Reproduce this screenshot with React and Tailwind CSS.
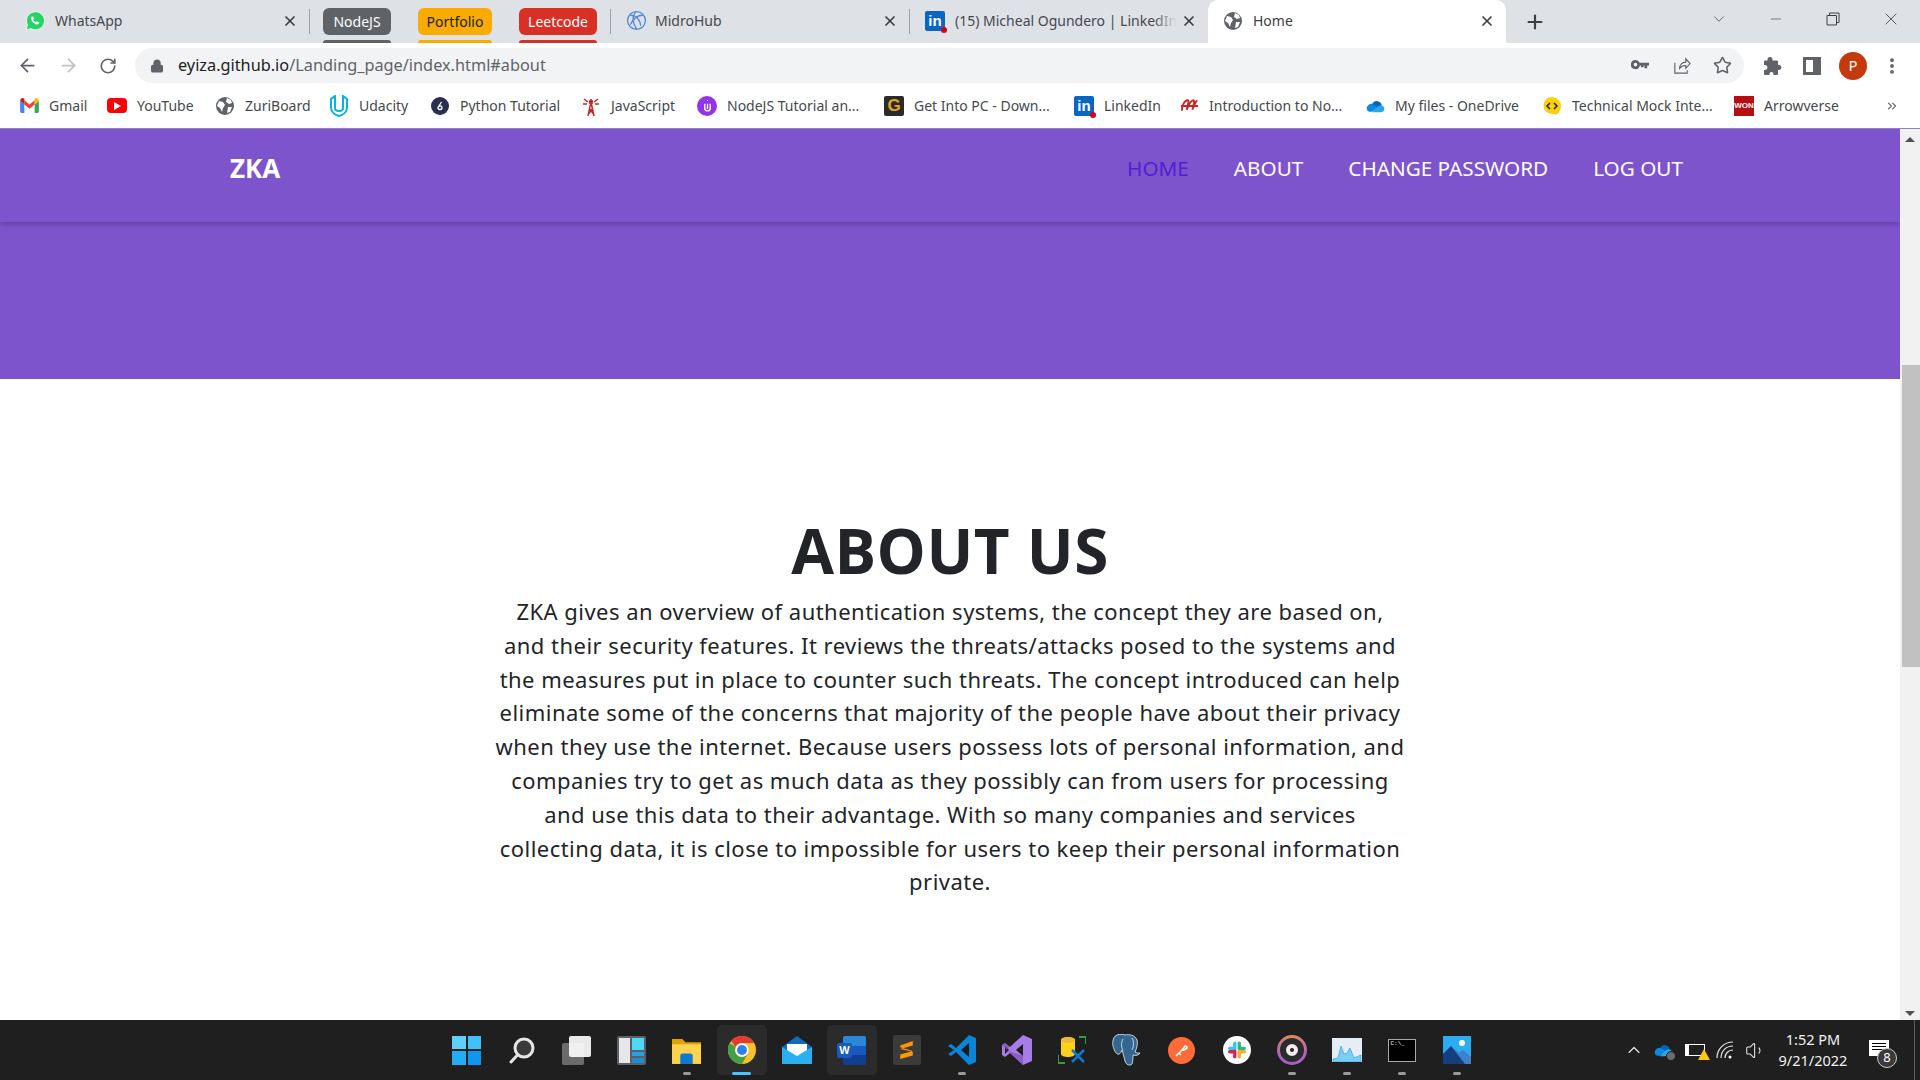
import React from 'react';
import { ArrowLeft, ArrowRight, RotateCw, Lock, Star, X, Plus, ChevronDown, Minus, EllipsisVertical, ChevronsRight, ChevronUp, Volume1 } from 'lucide-react';

const ui = { fontFamily: '"Noto Sans", "Open Sans", sans-serif' };

// favicons
const Globe = ({ c = '#5f6368' }) => (
  <svg viewBox="0 0 20 20" className="w-[20px] h-[20px] shrink-0">
    <circle cx="10" cy="10" r="9" fill={c} />
    <path d="M4 5l4 1 2 3-2 3-1 4-2-4-3-2zM12 2l4 2 1 3-3 1-3-2zM13 11l4 0-2 5-3 1z" fill="#fff" />
  </svg>
);
const WhatsAppIcon = () => (
  <svg viewBox="0 0 20 20" className="w-[20px] h-[20px] shrink-0">
    <path d="M1 19l1.5-5A9 9 0 1 1 6 17.6z" fill="#25d366" stroke="#fff" strokeWidth="0.8" />
    <path d="M7 5.5c-1 .6-1.400 2-.6 3.600 1 2 2.800 3.600 4.800 4.300 1.400.4 2.600-.2 3-1.300l-.2-.8-2-1-1 1c-1.200-.5-2.200-1.500-2.800-2.800l.8-1-.9-2.100z" fill="#fff" />
  </svg>
);
const LinkedIn = ({ dot = true }) => (
  <span className="relative w-[20px] h-[20px] shrink-0 bg-[#0a66c2] rounded-[2px] flex items-center justify-center text-white font-bold text-[15px] leading-none" style={{ fontFamily: '"Liberation Sans", sans-serif' }}>
    in
    {dot && <span className="absolute right-[-2px] bottom-[-2px] w-[6px] h-[6px] rounded-full bg-[#d6001c]" />}
  </span>
);
const MidroIcon = () => (
  <svg viewBox="0 0 20 20" className="w-[21px] h-[21px] shrink-0" fill="none" stroke="#4f86d9" strokeWidth="1.200">
    <circle cx="10" cy="10" r="8.500" />
    <path d="M4 5c5 0 9 3 10 10M9 2c-3 4-3 10 1 16M16 5c-4 0-9 3-12 9" />
  </svg>
);
const Gmail = () => (
  <svg viewBox="0 0 20 16" className="w-[19px] h-[15px] shrink-0">
    <path d="M0 3v11.500A1.500 1.500 0 0 0 1.500 16H4.500V7z" fill="#4285f4" />
    <path d="M20 3v11.500a1.500 1.500 0 0 1-1.500 1.500h-3V7z" fill="#34a853" />
    <path d="M4.500 7v-4.500L10 7l5.500-4.500V7L10 11.500z" fill="#ea4335" />
    <path d="M0 3c0-2.500 2.800-3.800 4.500-2.300V7z" fill="#c5221f" />
    <path d="M20 3c0-2.500-2.800-3.800-4.500-2.300V7z" fill="#fbbc04" />
  </svg>
);
const YouTube = () => (
  <span className="w-[20px] h-[15px] shrink-0 rounded-[4px] bg-[#f00] flex items-center justify-center">
    <svg viewBox="0 0 8 8" className="w-[8px] h-[8px]"><path d="M1 0l7 4-7 4z" fill="#fff" /></svg>
  </span>
);
const Udacity = () => (
  <svg viewBox="0 0 20 22" className="w-[20px] h-[22px] shrink-0" fill="none" stroke="#02b3e4" strokeWidth="2">
    <path d="M2 4v9c0 4 4 7 8 8 4-1 8-4 8-8V4l-4-3v12c0 2-2 3-4 3s-4-1-4-3V1z" />
  </svg>
);
const PythonT = () => (
  <span className="w-[18px] h-[18px] shrink-0 rounded-full bg-[#2a2f4f] flex items-center justify-center">
    <svg viewBox="0 0 10 10" className="w-[10px] h-[10px]" fill="none" stroke="#fff" strokeWidth="1.300"><path d="M6.500 1L3 6.500a2 2 0 1 0 4 0 2 2 0 0 0-3.500-1" /></svg>
  </span>
);
const JsTower = () => (
  <svg viewBox="0 0 20 22" className="w-[20px] h-[22px] shrink-0" fill="none" stroke="#c62828" strokeWidth="1.500">
    <path d="M7 21L10 7l3 14M8 15h4M7.500 19L12 13M12.500 19L8 13M10 6V4M3 4l4 3M17 4l-4 3M2 9h4M18 9h-4" />
    <circle cx="10" cy="7" r="1.500" fill="#c62828" />
  </svg>
);
const NodeTut = () => (
  <span className="w-[20px] h-[20px] shrink-0 rounded-full bg-[#9333ea] flex items-center justify-center">
    <svg viewBox="0 0 10 14" className="w-[9px] h-[13px]" fill="none" stroke="#fff" strokeWidth="1.500"><path d="M2 5v5a3 3 0 0 0 6 0V5M5 1v1M5 5v6" /></svg>
  </span>
);
const GetInto = () => (
  <span className="w-[20px] h-[20px] shrink-0 bg-[#2b2b2b] rounded-[2px] flex items-center justify-center text-[#e0a526] font-bold text-[17px] leading-none" style={{ fontFamily: '"Liberation Sans", sans-serif' }}>G</span>
);
const IntroIcon = () => (
  <svg viewBox="0 0 20 16" className="w-[19px] h-[16px] shrink-0" fill="none" stroke="#c62828" strokeWidth="2">
    <path d="M2 13C2 7 5 2 8 2c2 0 0 6-1 10M7 12c2-5 5-10 7-10 2 0 0 6-1 10M13 12c1-3 3-8 5-10M1 8h18" />
  </svg>
);
const OneDrive = ({ className = 'w-[20px] h-[14px]' }) => (
  <svg viewBox="0 0 24 16" className={`${className} shrink-0`}>
    <path d="M9 5a6 6 0 0 1 11 2l-6 5-8-2z" fill="#0364b8" />
    <path d="M4 7a5 5 0 0 1 6-1l5 4-7 5H5a4.500 4.500 0 0 1-1-8z" fill="#0f88e0" />
    <path d="M19 7a4.500 4.500 0 0 1 3.500 7L20 15.500H8l7-7z" fill="#28a8ea" />
  </svg>
);
const MockIcon = () => (
  <svg viewBox="0 0 20 20" className="w-[20px] h-[20px] shrink-0">
    <path d="M10 1a9 9 0 0 1 9 9c0 6-4 8-5 9l-1-1H10a8.500 8.500 0 0 1 0-17z" fill="#fdd00e" />
    <path d="M8 7l-3 3 3 3M12 7l3 3-3 3" fill="none" stroke="#222" strokeWidth="1.500" />
  </svg>
);
const WonIcon = () => (
  <span className="w-[20px] h-[20px] shrink-0 bg-[#b80d12] flex items-center justify-center text-white font-bold text-[8px] leading-none" style={{ fontFamily: '"Liberation Sans", sans-serif' }}>WON</span>
);

const bookmarks = [
  { label: 'Gmail', w: 'w-[88px]', icon: <Gmail /> },
  { label: 'YouTube', w: 'w-[108px]', icon: <YouTube /> },
  { label: 'ZuriBoard', w: 'w-[114px]', icon: <Globe /> },
  { label: 'Udacity', w: 'w-[101px]', icon: <Udacity /> },
  { label: 'Python Tutorial', w: 'w-[151px]', icon: <PythonT /> },
  { label: 'JavaScript', w: 'w-[116px]', icon: <JsTower /> },
  { label: 'NodeJS Tutorial an...', w: 'w-[187px]', icon: <NodeTut /> },
  { label: 'Get Into PC - Down...', w: 'w-[190px]', icon: <GetInto /> },
  { label: 'LinkedIn', w: 'w-[105px]', icon: <LinkedIn /> },
  { label: 'Introduction to No...', w: 'w-[186px]', icon: <IntroIcon /> },
  { label: 'My files - OneDrive', w: 'w-[177px]', icon: <OneDrive /> },
  { label: 'Technical Mock Inte...', w: 'w-[192px]', icon: <MockIcon /> },
  { label: 'Arrowverse', w: 'w-[120px]', icon: <WonIcon /> },
];

function Tab({ w, pl, icon, title, gap = 'ml-[10px]', fade }) {
  return (
    <div className={`${w} ${pl} flex items-center h-full shrink-0 pb-[2px]`}>
      {icon}
      <span className={`${gap} relative flex-1 min-w-0 overflow-hidden whitespace-nowrap text-[14px] text-[#45494e]`}>
        {title}
        {fade && <span className="absolute right-0 top-0 bottom-0 w-[24px] bg-gradient-to-r from-transparent to-[#dee1e6]" />}
      </span>
      <X size={16} strokeWidth={2.600} className="text-[#3c4043] shrink-0 mr-[11px] ml-[4px]" />
    </div>
  );
}

const Sep = () => <div className="w-px h-[25px] bg-[#9aa0a6] shrink-0 self-center" />;

function Pill({ label, bg, fg, w }) {
  return (
    <div className={`${w} h-full flex flex-col shrink-0`}>
      <div className={`${bg} ${fg} mt-[8px] h-[27px] rounded-[6px] flex items-center justify-center text-[14px] pb-[1px]`}>{label}</div>
      <div className={`${bg} mt-auto h-[3px] rounded-t-[3px]`} />
    </div>
  );
}

function TabStrip() {
  return (
    <div className="h-[43px] bg-[#dee1e6] flex items-stretch shrink-0">
      <Tab w="w-[309px]" pl="pl-[25px]" icon={<WhatsAppIcon />} title="WhatsApp" />
      <Sep />
      <div className="flex gap-[27px] pl-[13px] w-[300px] shrink-0">
        <Pill label="NodeJS" bg="bg-[#5f6368]" fg="text-white" w="w-[68px]" />
        <Pill label="Portfolio" bg="bg-[#f9ab00]" fg="text-[#202124]" w="w-[74px]" />
        <Pill label="Leetcode" bg="bg-[#d93025]" fg="text-white" w="w-[78px]" />
      </div>
      <Sep />
      <Tab w="w-[298px]" pl="pl-[15px]" gap="ml-[8px]" icon={<MidroIcon />} title="MidroHub" />
      <Sep />
      <Tab w="w-[298px]" pl="pl-[15px]" icon={<LinkedIn />} title="(15) Micheal Ogundero | LinkedIn" fade />
      <div className="w-[298px] bg-white rounded-t-[10px] pl-[15px] pb-[2px] flex items-center h-full shrink-0">
        <Globe />
        <span className="ml-[10px] flex-1 text-[14px] text-[#3c4043]">Home</span>
        <X size={16} strokeWidth={2.600} className="text-[#3c4043] shrink-0 mr-[11px]" />
      </div>
      <div className="flex items-center pl-[18px]">
        <Plus size={22} strokeWidth={2.400} className="text-[#3c4043]" />
      </div>
      <div className="flex-1 flex items-center justify-end pb-[6px] text-[#3c4043]">
        <ChevronDown size={18} strokeWidth={1} className="mr-[40px]" />
        <Minus size={16} strokeWidth={1} className="mr-[42px]" />
        <svg viewBox="0 0 14 14" className="w-[14px] h-[14px] mr-[41px]" fill="none" stroke="#3c4043" strokeWidth="1"><path d="M1 3.500h9.500V13H1zM3.500 3.500V1H13v9.500h-2.500" /></svg>
        <X size={20} strokeWidth={1} className="mr-[19px]" />
      </div>
    </div>
  );
}

function Toolbar() {
  return (
    <div className="h-[40px] bg-white flex items-end shrink-0 text-[#5f6368]">
      <div className="h-[35px] w-[135px] flex items-center shrink-0">
        <ArrowLeft size={21} strokeWidth={2} className="ml-[17px] text-[#5f6368]" />
        <ArrowRight size={21} strokeWidth={2} className="ml-[20px] text-[#bdc1c6]" />
        <RotateCw size={18} strokeWidth={2.200} className="ml-[20px]" />
      </div>
      <div className="h-[35px] w-[1609px] bg-[#f1f3f4] rounded-full flex items-center shrink-0">
        <Lock size={14} strokeWidth={2.600} fill="#5f6368" className="ml-[15px]" />
        <span className="ml-[14px] text-[16.300px] text-[#202124] leading-none">eyiza.github.io<span className="text-[#5f6368]">/Landing_page/index.html#about</span></span>
        <div className="ml-auto flex items-center">
          <svg viewBox="0 0 20 12" className="w-[18px] h-[11px] mr-[23px]" fill="#5f6368"><path fillRule="evenodd" d="M5 0a5 5 0 0 1 4.600 3H20v3h-2v3h-3V6h-1v2h-3V6H9.800A5 5 0 1 1 5 0zm0 3a2 2 0 1 0 0 4 2 2 0 0 0 0-4z" /></svg>
          <svg viewBox="0 0 20 20" className="w-[19px] h-[19px] mr-[22px]" fill="none" stroke="#5f6368" strokeWidth="1.200"><path d="M3 7v11h13v-3M8 13c0-4 3-6.500 6.500-6.500V3L19 8l-4.500 5V10C12 10 9.500 11 8 13z" /></svg>
          <Star size={19} strokeWidth={2} className="mr-[12px]" />
        </div>
      </div>
      <div className="h-[35px] flex-1 flex items-center">
        <svg viewBox="0 0 20 20" className="w-[20px] h-[20px] ml-[18px]" fill="#5f6368"><path d="M8 1a2.500 2.500 0 0 1 2.500 2.500V4.500H15a1 1 0 0 1 1 1V9h1a2.500 2.500 0 0 1 0 5h-1v4a1 1 0 0 1-1 1h-3.500v-1a2 2 0 0 0-4 0v1H3a1 1 0 0 1-1-1v-4h1a2.500 2.500 0 0 0 0-5H2V5.500a1 1 0 0 1 1-1h2.500V3.500A2.500 2.500 0 0 1 8 1z" /></svg>
        <div className="w-[18px] h-[18px] ml-[21px] border-[3px] border-r-[8px] border-[#5f6368] bg-white" />
        <div className="w-[28px] h-[28px] ml-[18px] rounded-full bg-[#c5390d] text-white text-[15px] flex items-center justify-center">P</div>
        <EllipsisVertical size={20} strokeWidth={2.600} className="ml-[15px]" />
      </div>
    </div>
  );
}

function Bookmarks() {
  return (
    <div className="h-[46px] bg-white border-b border-[#8f84b8] flex items-center pl-[19px] shrink-0">
      {bookmarks.map((b) => (
        <div key={b.label} className={`${b.w} flex items-center shrink-0 gap-[10px]`}>
          <span className="w-[20px] flex justify-center shrink-0">{b.icon}</span>
          <span className="text-[14px] text-[#45494e] whitespace-nowrap">{b.label}</span>
        </div>
      ))}
      <ChevronsRight size={14} className="text-[#5f6368] ml-[31px]" />
    </div>
  );
}

const aboutLines = [
  'ZKA gives an overview of authentication systems, the concept they are based on,',
  'and their security features. It reviews the threats/attacks posed to the systems and',
  'the measures put in place to counter such threats. The concept introduced can help',
  'eliminate some of the concerns that majority of the people have about their privacy',
  'when they use the internet. Because users possess lots of personal information, and',
  'companies try to get as much data as they possibly can from users for processing',
  'and use this data to their advantage. With so many companies and services',
  'collecting data, it is close to impossible for users to keep their personal information',
  'private.',
];

function Page() {
  return (
    <main className="flex-1 min-w-0 bg-white overflow-hidden" style={ui}>
      <nav className="h-[93px] bg-[#7e54cd] shadow-[0_2px_6px_rgba(0,0,0,0.25)] flex items-center pl-[230px] pr-[217px] pb-[14px] relative">
        <span className="text-white font-bold text-[26px]">ZKA</span>
        <div className="ml-auto flex items-center gap-[45px] text-[20.700px] text-white">
          <a className="text-[#4f1fd6]">HOME</a>
          <a>ABOUT</a>
          <a>CHANGE PASSWORD</a>
          <a>LOG OUT</a>
        </div>
      </nav>
      <div className="h-[157px] bg-[#7e54cd]" />
      <section className="pt-[134px] flex flex-col items-center text-[#212529]">
        <h1 className="text-[62px] font-bold leading-[74px] tracking-[0.5px]" style={{ fontFamily: '"Open Sans", sans-serif' }}>ABOUT US</h1>
        <div className="text-[22px] leading-[33.800px] tracking-[0.47px] text-center whitespace-nowrap mt-[8px]">
          {aboutLines.map((l) => <p key={l}>{l}</p>)}
        </div>
      </section>
    </main>
  );
}

function ScrollBar() {
  return (
    <div className="w-[20px] bg-[#f1f1f1] flex flex-col items-center shrink-0 justify-between pt-[8px] pb-[4px] relative">
      <div className="w-0 h-0 border-x-[5px] border-x-transparent border-b-[5px] border-b-[#505050]" />
      <div className="absolute top-[236px] left-[2px] right-0 h-[302px] bg-[#c1c1c1]" />
      <div className="w-0 h-0 border-x-[5px] border-x-transparent border-t-[5px] border-t-[#505050]" />
    </div>
  );
}

// taskbar icons
const taskIcons = [
  { k: 'start', svg: <div className="grid grid-cols-2 gap-[2px] w-[29px] h-[29px]"><div className="bg-[#5fd0fb]" /><div className="bg-[#3fc1fb]" /><div className="bg-[#22aef5]" /><div className="bg-[#0d96f2]" /></div> },
  { k: 'search', svg: <svg viewBox="0 0 28 28" className="w-[28px] h-[28px]" fill="#3a3a3a" stroke="#e6e6e6" strokeWidth="3"><circle cx="16" cy="12" r="9" /><path d="M9.500 19L3 26" strokeLinecap="round" fill="none" /></svg> },
  { k: 'task', svg: <div className="relative w-[29px] h-[29px]"><div className="absolute left-0 bottom-0 w-[22px] h-[22px] bg-[#6b6b6b] rounded-[2px]" /><div className="absolute right-0 top-0 w-[22px] h-[21px] bg-white/90 rounded-[2px]" /></div> },
  { k: 'widgets', svg: <div className="w-[29px] h-[29px] bg-[#5d6166] rounded-[2px] p-[2px] flex gap-[2px]"><div className="w-[11px] bg-[#e5e7ea]" /><div className="flex-1 flex flex-col gap-[2px]"><div className="h-[12px] bg-[#4fd8fa]" /><div className="flex-1 bg-[#22a3e8]" /><div className="flex-1 bg-[#1a8fd8]" /></div></div> },
  { k: 'files', dot: 'gray', svg: <svg viewBox="0 0 28 28" className="w-[29px] h-[29px]"><path d="M0 3h10l3 3h15v4H0z" fill="#dfa000" /><path d="M0 8h28v19H0z" fill="#fdd34d" /><path d="M8 19a2 2 0 0 1 2-2h8a2 2 0 0 1 2 2v8H8z" fill="#0f78d4" /></svg> },
  { k: 'chrome', active: true, dot: 'blue', svg: <svg viewBox="0 0 48 48" className="w-[28px] h-[28px]"><circle cx="24" cy="24" r="24" fill="#fbc02d" /><path d="M24 0a24 24 0 0 1 20.800 12H24a12 12 0 0 0-11 7L5.500 8.500A24 24 0 0 1 24 0z" fill="#e53935" /><path d="M3.200 12A24 24 0 0 0 24 48l10-17.500A12 12 0 0 1 13 19z" fill="#43a047" /><circle cx="24" cy="24" r="11.500" fill="#fff" /><circle cx="24" cy="24" r="8.500" fill="#2f80ed" /></svg> },
  { k: 'mail', svg: <svg viewBox="0 0 30 28" className="w-[30px] h-[28px]"><path d="M15 0l15 11v17H0V11z" fill="#0f6cbd" /><path d="M5 8h20v9l-10 5-10-5z" fill="#fff" /><path d="M0 11l15 9 15-9v17H0z" fill="#2ab0f0" /></svg> },
  { k: 'word', active: true, svg: <div className="relative w-[29px] h-[29px]"><div className="absolute right-0 top-0 w-[23px] h-[29px] rounded-[2px] bg-[linear-gradient(#2b88d8_33%,#185abd_33%_66%,#103f91_66%)]" /><div className="absolute left-0 top-[7px] w-[15px] h-[15px] rounded-[2px] bg-[#185abd] text-white text-[11px] font-bold flex items-center justify-center leading-none" style={{ fontFamily: '"Liberation Sans", sans-serif' }}>W</div></div> },
  { k: 'sublime', svg: <div className="w-[28px] h-[30px] bg-[#3b3b3b] rounded-[2px] flex items-center justify-center"><svg viewBox="0 0 16 20" className="w-[15px] h-[18px]" fill="#ff9800"><path d="M15 0v5L1 9V5zM1 9l14 3v-1L1 7zM15 11v5L1 20v-5z" /></svg></div> },
  { k: 'vscode', dot: 'gray', svg: <svg viewBox="0 0 28 30" className="w-[28px] h-[30px]"><path d="M21 0l7 3v24l-7 3L8 17l-5 4-3-2 6-4-6-4 3-2 5 4z" fill="#0a84d6" /><path d="M21 8l-8 7 8 7z" fill="#1a1a1a" /></svg> },
  { k: 'vs', svg: <svg viewBox="0 0 30 30" className="w-[30px] h-[30px]"><path d="M21 0l9 4v22l-9 4-13-12-5 4-3-2V10l3-2 5 4z" fill="#a97be8" /><path d="M21 9l-7 6 7 6zM3 11v8l4-4z" fill="#1f1f1f" /><path d="M21 0L8 12l-5-4-3 2 21 20V21L4 15" fill="#7a52b3" opacity=".7" /></svg> },
  { k: 'ssms', svg: <svg viewBox="0 0 28 28" className="w-[28px] h-[28px]"><path d="M3 4c0-4 14-4 14 0v14c0 4-14 4-14 0z" fill="#fcd116" /><ellipse cx="10" cy="4" rx="7" ry="3" fill="#ecb73d" /><path d="M0 19v8h7M21 1h7v7" fill="none" stroke="#2e9e3f" strokeWidth="2" /><path d="M14 14l12 12M26 14L14 26" stroke="#0f78d4" strokeWidth="2.500" /></svg> },
  { k: 'pg', svg: <svg viewBox="0 0 30 32" className="w-[30px] h-[32px]"><path d="M5 1c-5 2-5 10-3 14 1 3 3 6 5 5 1 0 3-3 3-4 1 3 2 7 3 11 1 4 5 5 7 3 1-3 1-7 1-9 3 1 6 0 7-2-2 0-4 0-5-1 2-4 3-9 2-12-2-5-8-6-12-5-3-1-5-1-8 0z" fill="#336791" stroke="#d8e2ea" strokeWidth="0.900" /><path d="M11 5c-2 4-2 8 0 11M20 4c2 3 2 8 0 12" fill="none" stroke="#d8e2ea" strokeWidth="0.900" /></svg> },
  { k: 'postman', svg: <div className="w-[27px] h-[27px] rounded-full bg-[#ff6c37] flex items-center justify-center"><svg viewBox="0 0 16 16" className="w-[16px] h-[16px]" fill="none" stroke="#fff" strokeWidth="1.500"><path d="M2 14l7-7M9 7l2-3a2 2 0 0 1 2 2l-3 2z" /><path d="M5 11l2 2" /></svg></div> },
  { k: 'slack', svg: <div className="w-[28px] h-[28px] rounded-full bg-white flex items-center justify-center"><svg viewBox="0 0 16 16" className="w-[18px] h-[18px]" fill="none" strokeWidth="3" strokeLinecap="round"><path d="M6 2v5" stroke="#36c5f0" /><path d="M1.500 6.500h4" stroke="#36c5f0" /><path d="M14.500 6.500H10M10 2v5" stroke="#2eb67d" /><path d="M10 14v-5M14.500 9.500H10" stroke="#ecb22e" /><path d="M1.500 9.500H6M6 9v5" stroke="#e01e5a" /></svg></div> },
  { k: 'ghost', dot: 'gray', svg: <div className="w-[30px] h-[30px] rounded-full bg-[conic-gradient(#e08a4f,#a860c8,#a860c8,#e08a4f)] flex items-center justify-center"><div className="w-[24px] h-[24px] rounded-full bg-[#2b2b2b] flex items-center justify-center"><div className="w-[12px] h-[12px] rounded-full bg-[#eee] border-[3px] border-[#eee] flex items-center justify-center"><div className="w-[4px] h-[4px] rounded-full bg-[#222]" /></div></div></div> },
  { k: 'perf', dot: 'gray', svg: <svg viewBox="0 0 30 24" className="w-[30px] h-[24px]"><path d="M0 0h30v24H0z" fill="#e6eef5" /><path d="M1 21l5-1 3-12 3 8 3-1 3-5 4 10 7-3v7H1z" fill="#7ccdf3" stroke="#2ba3e0" strokeWidth=".7" /></svg> },
  { k: 'cmd', dot: 'gray', svg: <div className="w-[28px] h-[23px] bg-black border-[1px] border-[#a8a8a8] text-[6px] text-white pl-[2px] leading-[8px]" style={{ fontFamily: '"Liberation Mono", monospace' }}>C:\_</div> },
  { k: 'photos', dot: 'gray', svg: <svg viewBox="0 0 28 28" className="w-[28px] h-[28px]"><path d="M0 0h28v28H0z" fill="#2aaef0" /><circle cx="19" cy="7" r="3" fill="#fff" /><path d="M0 18l8-8 8 7 4-3 8 7v7H0z" fill="#3f7fd0" /><path d="M0 28V18l8-8 14 18z" fill="#123f80" /></svg> },
];

function TaskIcon({ svg, active, dot }) {
  return (
    <div className="relative w-[55px] h-[60px] flex items-center justify-center shrink-0">
      {active && <div className="absolute top-[5px] left-[3px] w-[50px] h-[50px] rounded-[5px] bg-[#2b2b2b]" />}
      <div className="relative">{svg}</div>
      {dot === 'gray' && <div className="absolute bottom-[5px] left-[24px] w-[8px] h-[3px] rounded-full bg-[#9a9a9a]" />}
      {dot === 'blue' && <div className="absolute bottom-[5px] left-[18px] w-[19px] h-[3px] rounded-full bg-[#4cc2ff]" />}
    </div>
  );
}

function Taskbar() {
  return (
    <div className="h-[60px] bg-[#1f1f1f] grid grid-cols-[439px_1fr] shrink-0 text-white" style={ui}>
      <div />
      <div className="flex items-center">
        <div className="flex shrink-0">
          {taskIcons.map((t) => <TaskIcon key={t.k} svg={t.svg} active={t.active} dot={t.dot} />)}
        </div>
        <div className="ml-auto flex items-center h-full">
          <ChevronUp size={20} strokeWidth={1.400} className="text-[#e8e8e8] mr-[9px]" />
          <span className="relative mr-[12px]">
            <OneDrive className="w-[20px] h-[14px]" />
            <span className="absolute -right-[3px] -bottom-[4px] w-[10px] h-[10px] rounded-full bg-[#6b6b6b] border border-[#1f1f1f]" />
          </span>
          <span className="relative w-[20px] h-[12px] mr-[10px] border-[1.500px] border-white">
            <span className="absolute left-0 top-0 bottom-0 w-[3px] bg-white" />
            <span className="absolute right-[-6px] bottom-[-5px] w-0 h-0 border-x-[6px] border-x-transparent border-b-[11px] border-b-[#fcc419]" />
          </span>
          <svg viewBox="0 0 20 20" className="w-[20px] h-[20px] mr-[10px]" fill="none" stroke="#e8e8e8" strokeWidth="1.200"><path d="M2 18C2 9 9 2 18 2M6 18c0-7 5-12 12-12M10 18c0-4 3-8 8-8" /><circle cx="15" cy="17" r="1.500" fill="#fff" stroke="none" /></svg>
          <Volume1 size={21} strokeWidth={1.200} className="text-[#e8e8e8]" />
          <div className="w-[88px] text-center text-[14.500px] leading-[21px] ml-[3px] text-[#f2f2f2]">
            <div>1:52 PM</div>
            <div>9/21/2022</div>
          </div>
          <div className="relative w-[20px] h-[16px] bg-white ml-[12px] mr-[25px] mb-[4px] flex flex-col gap-[2px] pt-[3px] px-[3px]">
            <div className="h-px bg-black" /><div className="h-px bg-black" /><div className="h-px bg-black" />
            <span className="absolute left-[8px] top-[8px] w-[20px] h-[20px] rounded-full bg-[#3a3a3a] border border-[#cfcfcf] text-[13px] flex items-center justify-center">8</span>
          </div>
          <div className="w-px h-full bg-[#5a5a5a] mr-[5px]" />
        </div>
      </div>
    </div>
  );
}

export default function App() {
  return (
    <div className="w-[1920px] h-[1080px] flex flex-col overflow-hidden bg-white" style={ui}>
      <TabStrip />
      <Toolbar />
      <Bookmarks />
      <div className="flex-1 flex min-h-0">
        <Page />
        <ScrollBar />
      </div>
      <Taskbar />
    </div>
  );
}
